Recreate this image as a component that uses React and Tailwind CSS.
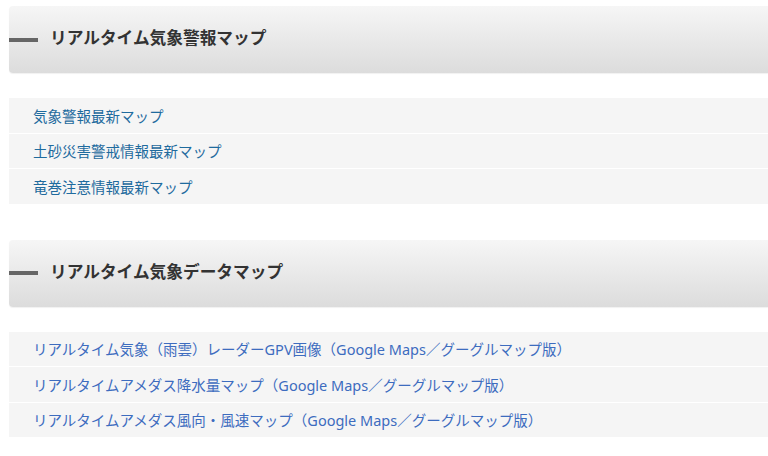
import React from "react";

const font = { fontFamily: '"Noto Sans", "Noto Sans CJK JP", sans-serif' };

function Heading({ children }) {
  return (
    <div className="flex h-[67px] items-center rounded-l-[4px] bg-gradient-to-b from-[#f6f6f6] to-[#dcdcdc] shadow-[0_1px_1px_rgba(0,0,0,0.06)]">
      <span className="h-[4px] w-[29px] bg-[#666666]" />
      <h2 className="ml-[12px] -mt-[2px] text-[16.7px] font-bold text-[#333333] leading-none">{children}</h2>
    </div>
  );
}

function List({ items, color }) {
  return (
    <ul className="flex flex-col gap-px">
      {items.map((t) => (
        <li key={t} className="flex h-[34.5px] items-center bg-[#f5f5f5] pl-[24px] pt-[1px]">
          <a className={`text-[14.5px] leading-none ${color}`}>{t}</a>
        </li>
      ))}
    </ul>
  );
}

export default function App() {
  return (
    <div className="h-[456px] w-[768px] overflow-hidden bg-white pl-[9px] pt-[6px]" style={font}>
      <Heading>リアルタイム気象警報マップ</Heading>
      <div className="mt-[25px]">
        <List
          color="text-[#1f6b9e]"
          items={["気象警報最新マップ", "土砂災害警戒情報最新マップ", "竜巻注意情報最新マップ"]}
        />
      </div>
      <div className="mt-[36px]">
        <Heading>リアルタイム気象データマップ</Heading>
      </div>
      <div className="mt-[25px]">
        <List
          color="text-[#3d6cbf]"
          items={[
            "リアルタイム気象（雨雲）レーダーGPV画像（Google Maps／グーグルマップ版）",
            "リアルタイムアメダス降水量マップ（Google Maps／グーグルマップ版）",
            "リアルタイムアメダス風向・風速マップ（Google Maps／グーグルマップ版）",
          ]}
        />
      </div>
    </div>
  );
}
